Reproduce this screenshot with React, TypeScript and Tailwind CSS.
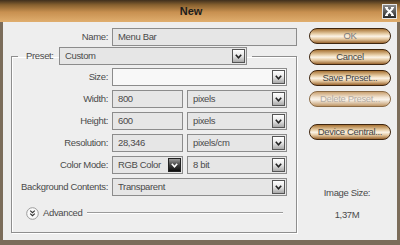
import React from 'react';

const FONT = "font-['Liberation_Sans',Arial,sans-serif]";

function Chevron({ dark }: { dark?: boolean }) {
  return (
    <svg width="7" height="5" viewBox="0 0 7 5">
      <path d="M0.8 0.8 L3.5 3.8 L6.2 0.8" fill="none" stroke={dark ? '#ffffff' : '#222222'} strokeWidth="1.6" />
    </svg>
  );
}

function ArrowButton({ dark }: { dark?: boolean }) {
  return (
    <div
      className={`flex h-full w-[13px] items-center justify-center border ${
        dark
          ? 'border-[#222] bg-[linear-gradient(to_bottom,#9a9a9a,#3a3a3a_55%,#0e0e0e)]'
          : 'border-[#555] bg-[linear-gradient(to_bottom,#ffffff,#e6e6e6_50%,#a8a8a8)]'
      }`}
    >
      <Chevron dark={dark} />
    </div>
  );
}

function Field({ value, width }: { value: string; width: string }) {
  return (
    <div className={`flex h-[18px] items-center border border-[#8c8c8c] bg-[#e6e6e6] pl-[5px] text-[#4a4a4a] ${width}`}>
      {value}
    </div>
  );
}

function Select({
  value,
  width,
  light,
  dark,
}: {
  value: string;
  width: string;
  light?: boolean;
  dark?: boolean;
}) {
  return (
    <div
      className={`flex h-[18px] items-center border border-[#8c8c8c] text-[#4a4a4a] ${width} ${
        light ? 'bg-[#f8f8f8]' : 'bg-[#e6e6e6]'
      }`}
    >
      <span className="flex-1 truncate pl-[5px]">{value}</span>
      <div className="h-full p-px">
        <ArrowButton dark={dark} />
      </div>
    </div>
  );
}

function Row({ label, children }: { label: string; children: React.ReactNode }) {
  return (
    <div className="flex h-[18px] items-center">
      <span className="w-[100px] pr-[4px] text-right text-[#4a4a4a]">{label}</span>
      <div className="flex items-center gap-[4px]">{children}</div>
    </div>
  );
}

function PillButton({ label, disabled, muted }: { label: string; disabled?: boolean; muted?: boolean }) {
  return (
    <div
      className={`flex h-[16px] w-[82px] items-center justify-center overflow-hidden whitespace-nowrap rounded-full border-[1.5px] ${
        disabled
          ? 'border-[#8a6a45] bg-[linear-gradient(to_bottom,#c9a170,#f4e8d8_40%,#faf4ec_55%,#c09868)] text-[#b4aca4]'
          : `border-[#3e2610] bg-[linear-gradient(to_bottom,#a87436,#e8cfa8_35%,#fbf3e6_52%,#e6caa2_72%,#9a6630)] ${
              muted ? 'text-[#7a7a7a]' : 'text-[#444]'
            }`
      }`}
    >
      {label}
    </div>
  );
}

function CloseButton() {
  return (
    <svg width="15" height="15" viewBox="0 0 15 15">
      <defs>
        <linearGradient id="cb" x1="0" y1="0" x2="0" y2="1">
          <stop offset="0" stopColor="#8e8e8e" />
          <stop offset="1" stopColor="#262626" />
        </linearGradient>
      </defs>
      <rect x="0.5" y="0.5" width="14" height="14" fill="url(#cb)" stroke="#e6e6e6" />
      <path d="M4 4 L11 11 M11 4 L4 11" stroke="#ffffff" strokeWidth="2" />
      <path d="M3 3.5 H6 M9 3.5 H12 M3 11.5 H6 M9 11.5 H12" stroke="#ffffff" strokeWidth="1" />
    </svg>
  );
}

function AdvancedIcon() {
  return (
    <svg width="13" height="13" viewBox="0 0 13 13">
      <circle cx="6.5" cy="6.5" r="5.8" fill="#fafafa" stroke="#9a9a9a" />
      <path d="M4.2 3.6 L6.5 5.6 L8.8 3.6 M4.2 6.6 L6.5 8.6 L8.8 6.6" fill="none" stroke="#333" strokeWidth="1.2" />
    </svg>
  );
}

export default function App() {
  return (
    <div className={`flex h-[245px] w-[400px] flex-col bg-[#7b6c5a] text-[9.5px] tracking-[-0.35px] ${FONT}`}>
      {/* Title bar */}
      <div className="flex h-[22px] items-center bg-[linear-gradient(to_bottom,#3f2f1d,#86602f_22%,#c89050_55%,#e0ae6e)]">
        <span className="flex-1 text-center text-[11px] font-bold tracking-normal text-[#1c1c1c]">New</span>
        <div className="mr-[3px] flex">
          <CloseButton />
        </div>
      </div>

      {/* Body */}
      <div className="mx-[3px] mb-[5px] flex flex-1 bg-[#eeeeee]">
        {/* Left column */}
        <div className="flex w-[300px] flex-col pt-[6px]">
          <div className="flex h-[18px] items-center">
            <span className="w-[109px] pr-[4px] text-right text-[#4a4a4a]">Name:</span>
            <Field value="Menu Bar" width="w-[185px]" />
          </div>

          <fieldset className="mt-[1px] ml-[8px] w-[286px] border border-[#8e8e8e] shadow-[1px_1px_0_#ffffff,inset_1px_1px_0_#ffffff]">
            <legend className="ml-[6px] flex items-center pr-[5px] pl-[8px]">
              <span className="w-[30px] text-[#4a4a4a]">Preset:</span>
              <div className="ml-[3px]">
                <Select value="Custom" width="w-[188px]" />
              </div>
            </legend>
            <div className="flex flex-col gap-[4px] pt-[3px]">
              <Row label="Size:">
                <Select value="" width="w-[175px]" light />
              </Row>
              <Row label="Width:">
                <Field value="800" width="w-[71px]" />
                <Select value="pixels" width="w-[100px]" />
              </Row>
              <Row label="Height:">
                <Field value="600" width="w-[71px]" />
                <Select value="pixels" width="w-[100px]" />
              </Row>
              <Row label="Resolution:">
                <Field value="28,346" width="w-[71px]" />
                <Select value="pixels/cm" width="w-[100px]" />
              </Row>
              <Row label="Color Mode:">
                <Select value="RGB Color" width="w-[71px]" dark />
                <Select value="8 bit" width="w-[100px]" />
              </Row>
              <Row label="Background Contents:">
                <Select value="Transparent" width="w-[175px]" />
              </Row>
            </div>
            <div className="mt-[11px] mb-[13px] mr-[13px] flex h-[12px] items-center pl-[14px]">
              <AdvancedIcon />
              <span className="ml-[4px] text-[#4a4a4a]">Advanced</span>
              <div className="ml-[5px] h-[2px] flex-1 border-t border-b border-t-[#9a9a9a] border-b-[#ffffff]" />
            </div>
          </fieldset>
        </div>

        {/* Right column */}
        <div className="flex flex-col pt-[6px] pl-[6px]">
          <PillButton label="OK" muted />
          <div className="mt-[5px]">
            <PillButton label="Cancel" />
          </div>
          <div className="mt-[5px]">
            <PillButton label="Save Preset..." />
          </div>
          <div className="mt-[5px]">
            <PillButton label="Delete Preset..." disabled />
          </div>
          <div className="mt-[17px]">
            <PillButton label="Device Central..." />
          </div>
          <div className="mt-[46px] flex w-[76px] flex-col items-center gap-[8px] text-[#4a4a4a]">
            <span>Image Size:</span>
            <span>1,37M</span>
          </div>
        </div>
      </div>
    </div>
  );
}
